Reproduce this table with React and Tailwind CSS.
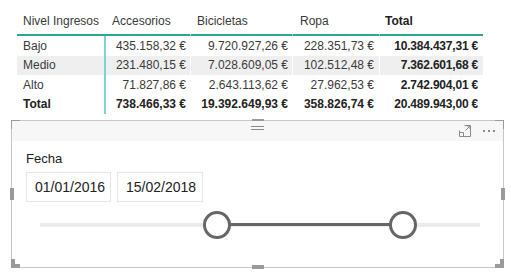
import React from "react";

const rows = [
  { name: "Bajo", a: "435.158,32 €", b: "9.720.927,26 €", r: "228.351,73 €", t: "10.384.437,31 €" },
  { name: "Medio", a: "231.480,15 €", b: "7.028.609,05 €", r: "102.512,48 €", t: "7.362.601,68 €", shade: true },
  { name: "Alto", a: "71.827,86 €", b: "2.643.113,62 €", r: "27.962,53 €", t: "2.742.904,01 €" },
];

const total = { name: "Total", a: "738.466,33 €", b: "19.392.649,93 €", r: "358.826,74 €", t: "20.489.943,00 €" };

// corner / edge grab handles of the selected visual
const Handle = ({ className }) => <div className={`absolute bg-[#9a9a9a] ${className}`} />;

const Row = ({ row, bold }) => (
  <div className={`flex h-[19.5px] items-center ${row.shade ? "bg-[#efefef]" : ""} ${bold ? "font-bold text-[#222]" : "text-[#3a3a3a]"}`}>
    <div className="w-[87px] pl-[6px]">{row.name}</div>
    <div className="w-[87px] h-full flex items-center justify-end border-l-2 border-l-[#7ad6cc] border-r border-r-white pr-[4px]">{row.a}</div>
    <div className="w-[102px] h-full flex items-center justify-end border-r border-r-white pr-[4px]">{row.b}</div>
    <div className="w-[87px] h-full flex items-center justify-end border-r border-r-white pr-[5px]">{row.r}</div>
    <div className="w-[103px] h-full flex items-center justify-end pr-[5px] font-bold text-[#222] tracking-[-0.2px]">{row.t}</div>
  </div>
);

export default function App() {
  return (
    <div className="w-[511px] h-[276px] bg-white overflow-hidden font-['Liberation_Sans',Arial,sans-serif] text-[12px]">
      <div className="ml-[17px] w-[466px]">
        <div className="flex h-[36px] text-[#3a3a3a]">
          <div className="w-[87px] border-b-2 border-b-[#2aa697] pl-[6px] pt-[12px]">Nivel Ingresos</div>
          <div className="w-[87px] border-b-2 border-b-[#2aa697] border-r border-r-white pl-[8px] pt-[12px]">Accesorios</div>
          <div className="w-[102px] border-b-2 border-b-[#2aa697] border-r border-r-white pl-[6px] pt-[12px]">Bicicletas</div>
          <div className="w-[87px] border-b-2 border-b-[#2aa697] border-r border-r-white pl-[7px] pt-[12px]">Ropa</div>
          <div className="w-[103px] border-b-2 border-b-[#2aa697] pl-[5px] pt-[12px] font-bold text-[#222]">Total</div>
        </div>
        {rows.map((r) => (
          <Row key={r.name} row={r} />
        ))}
        <Row row={total} bold />
      </div>

      <div className="relative mt-[6px] ml-[11px] w-[493px] h-[148px] border border-[#c6c6c6]">
        <Handle className="-left-px -top-px w-[9px] h-[4px]" />
        <Handle className="-left-px -top-px w-[4px] h-[9px]" />
        <Handle className="-right-px -top-px w-[9px] h-[4px]" />
        <Handle className="-right-px -top-px w-[4px] h-[9px]" />
        <Handle className="-left-px -bottom-px w-[9px] h-[4px]" />
        <Handle className="-left-px -bottom-px w-[4px] h-[9px]" />
        <Handle className="-right-px -bottom-px w-[9px] h-[4px]" />
        <Handle className="-right-px -bottom-px w-[4px] h-[9px]" />
        <Handle className="left-[240px] -top-[2px] w-[12px] h-[4px]" />
        <Handle className="left-[240px] -bottom-[2px] w-[12px] h-[4px]" />
        <Handle className="-left-[2px] top-[67px] w-[4px] h-[12px]" />
        <Handle className="-right-[2px] top-[67px] w-[4px] h-[12px]" />

        <div className="h-[20px] bg-[#f7f7f7] flex items-center relative">
          <div className="absolute left-[239px] top-[5px] w-[13px] flex flex-col gap-[2px]">
            <div className="h-px bg-[#8a8a8a]" />
            <div className="h-px bg-[#8a8a8a]" />
          </div>
          <div className="ml-auto mr-[8px] flex items-center gap-[12px]">
            <svg width="12" height="12" viewBox="0 0 12 12" fill="none" stroke="#8a8a8a" strokeWidth="1">
              <path d="M5.5 0.5H11.5V11.5H0.5V5.5" />
              <path d="M0.5 7.5H4.5V11.5" />
              <path d="M6.5 5.5L11 1M8 1H11V4" />
            </svg>
            <div className="flex gap-[3px]">
              <div className="w-[2px] h-[2px] bg-[#8a8a8a]" />
              <div className="w-[2px] h-[2px] bg-[#8a8a8a]" />
              <div className="w-[2px] h-[2px] bg-[#8a8a8a]" />
            </div>
          </div>
        </div>

        <div className="pl-[14px] pt-[9px]">
          <div className="text-[13px] text-[#222] leading-[18px]">Fecha</div>
          <div className="mt-[4px] flex gap-[6px]">
            <div className="w-[85px] h-[30px] border border-[#e6e6e6] flex items-center pl-[8px] text-[14px] text-[#222]">01/01/2016</div>
            <div className="w-[86px] h-[30px] border border-[#e6e6e6] flex items-center pl-[8px] text-[14px] text-[#222]">15/02/2018</div>
          </div>
        </div>

        <div className="relative ml-[28px] mt-[21px] w-[440px] h-[4px] bg-[#ebebeb]">
          <div className="absolute left-[177px] w-[186px] top-[0px] h-[3px] bg-[#666]" />
          <div className="absolute left-[163px] -top-[12px] w-[28px] h-[28px] rounded-full border-[3px] border-[#666] bg-white" />
          <div className="absolute left-[349px] -top-[12px] w-[28px] h-[28px] rounded-full border-[3px] border-[#666] bg-white" />
        </div>
      </div>
    </div>
  );
}
